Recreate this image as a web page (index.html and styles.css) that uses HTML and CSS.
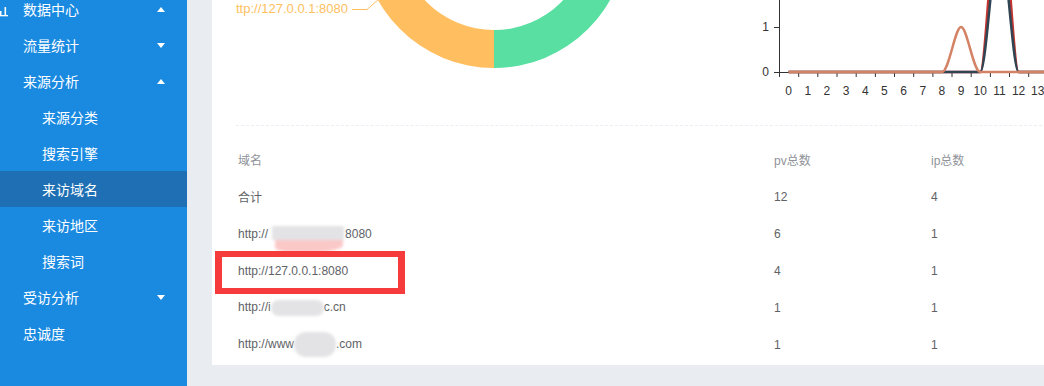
FILE: index.html
```html
<html>
  <head>
    <meta charset="utf-8" />
    <title>来访域名</title>
    <link rel="stylesheet" href="styles.css">
  </head>
  <body>
    <div class="layout">
      <div class="sidebar">
        <ul class="menu">
          <li class="item">
            <svg class="icon" width="8" height="16" viewBox="0 0 8 16">
              <rect x="0" y="10" width="1.5" height="4" fill="#fff" />
              <rect x="4.5" y="6" width="1.6" height="8" fill="#fff" />
              <rect x="0" y="14" width="8" height="1.3" fill="#fff" />
            </svg>
            <span>数据中心</span><i class="caret up"></i>
          </li>
          <li class="item"><span>流量统计</span><i class="caret"></i></li>
          <li class="item"><span>来源分析</span><i class="caret up"></i></li>
          <li class="item sub"><span>来源分类</span></li>
          <li class="item sub"><span>搜索引擎</span></li>
          <li class="item sub active"><span>来访域名</span></li>
          <li class="item sub"><span>来访地区</span></li>
          <li class="item sub"><span>搜索词</span></li>
          <li class="item"><span>受访分析</span><i class="caret"></i></li>
          <li class="item"><span>忠诚度</span></li>
        </ul>
      </div>
      <div class="main">
        <div class="card">
          <div class="charts">
            <svg class="pie" width="504" height="110">
              <path d="M125,-65 A133,133 0 0 0 258,68 L258,30 A95,95 0 0 1 163,-65 Z" fill="#ffbf60" />
              <path d="M258,68 A133,133 0 0 0 391,-65 L353,-65 A95,95 0 0 1 258,30 Z" fill="#58dfa1" />
              <polyline points="116,9.5 131,9.5 143,-1" fill="none" stroke="#ffbf60" stroke-width="1" />
              <text x="112" y="13" text-anchor="end" class="pie-label">http://127.0.0.1:8080</text>
            </svg>
            <svg class="line" width="304" height="110">
              <line x1="39.5" y1="0" x2="39.5" y2="72.5" stroke="#333" />
              <line x1="34" y1="27.5" x2="39.5" y2="27.5" stroke="#333" />
              <line x1="34" y1="72.5" x2="39.5" y2="72.5" stroke="#333" />
              <line x1="39" y1="72.5" x2="304" y2="72.5" stroke="#333" />
              <text x="29" y="31" text-anchor="end" class="axis">1</text>
              <text x="29" y="76" text-anchor="end" class="axis">0</text>
              <g stroke="#333">
                <line x1="58.7" y1="72" x2="58.7" y2="77" />
                <line x1="77.8" y1="72" x2="77.8" y2="77" />
                <line x1="97" y1="72" x2="97" y2="77" />
                <line x1="116.2" y1="72" x2="116.2" y2="77" />
                <line x1="135.4" y1="72" x2="135.4" y2="77" />
                <line x1="154.5" y1="72" x2="154.5" y2="77" />
                <line x1="173.7" y1="72" x2="173.7" y2="77" />
                <line x1="192.9" y1="72" x2="192.9" y2="77" />
                <line x1="212" y1="72" x2="212" y2="77" />
                <line x1="231.2" y1="72" x2="231.2" y2="77" />
                <line x1="250.4" y1="72" x2="250.4" y2="77" />
                <line x1="269.5" y1="72" x2="269.5" y2="77" />
                <line x1="288.7" y1="72" x2="288.7" y2="77" />
                <line x1="39.5" y1="72" x2="39.5" y2="77" />
              </g>
              <g class="axis" text-anchor="middle">
                <text x="48.6" y="95">0</text>
                <text x="67.8" y="95">1</text>
                <text x="86.9" y="95">2</text>
                <text x="106.1" y="95">3</text>
                <text x="125.3" y="95">4</text>
                <text x="144.4" y="95">5</text>
                <text x="163.6" y="95">6</text>
                <text x="182.8" y="95">7</text>
                <text x="201.9" y="95">8</text>
                <text x="221.1" y="95">9</text>
                <text x="240.3" y="95">10</text>
                <text x="259.5" y="95">11</text>
                <text x="278.6" y="95">12</text>
                <text x="297.8" y="95">13</text>
              </g>
              <path d="M48.6,72 L240.3,72 C246,72 253,-108 259.5,-108 C266,-108 273,72 278.6,72 L304,72" fill="none" stroke="#c23531" stroke-width="2.5" />
              <path d="M48.6,72 L240.3,72 C246.3,72 253.5,-63 259.5,-63 C265.5,-63 272.6,72 278.6,72 L304,72" fill="none" stroke="#2f4554" stroke-width="2.5" />
              <path d="M48.6,72 L201.9,72 C209,72 215,27 221.1,27 C227.2,27 233.3,72 240.3,72 L304,72" fill="none" stroke="#d48265" stroke-width="2.5" />
            </svg>
          </div>
          <table class="table">
            <colgroup>
              <col style="width: 536px" />
              <col style="width: 157px" />
              <col />
            </colgroup>
            <thead>
              <tr><th>域名</th><th>pv总数</th><th>ip总数</th></tr>
            </thead>
            <tbody>
              <tr><td>合计</td><td>12</td><td>4</td></tr>
              <tr>
                <td>http://<span class="blur wide"><span class="smudge"></span></span>8080</td>
                <td>6</td><td>1</td>
              </tr>
              <tr><td>http://127.0.0.1:8080</td><td>4</td><td>1</td></tr>
              <tr><td>http://i<span class="blur mid"></span>c.cn</td><td>1</td><td>1</td></tr>
              <tr><td>http://www<span class="blur round"></span>.com</td><td>1</td><td>1</td></tr>
            </tbody>
          </table>
          <div class="mark"></div>
        </div>
      </div>
    </div>
  </body>
</html>
```

FILE: styles.css
```css
* {
  margin: 0;
  padding: 0;
  box-sizing: border-box;
}
body {
  background: #e9edf2;
  font-family: "Liberation Sans", "Noto Sans CJK SC", sans-serif;
  overflow: hidden;
}
.layout {
  display: flex;
  height: 386px;
  overflow: hidden;
}
.sidebar {
  width: 187px;
  flex-shrink: 0;
  background: #1a8ae1;
  overflow: hidden;
}
.menu {
  list-style: none;
  margin-top: -9px;
}
.item {
  display: flex;
  align-items: center;
  height: 36px;
  padding: 0 22px 0 23px;
  color: #fff;
  font-size: 14px;
  font-family: "Noto Sans CJK SC", sans-serif;
}
.item.sub {
  padding-left: 42px;
}
.item.active {
  background: #1e6fb3;
}
.icon {
  margin-left: -23px;
  margin-right: 15px;
}
.caret {
  margin-left: auto;
  width: 0;
  height: 0;
  border-left: 4px solid transparent;
  border-right: 4px solid transparent;
  border-top: 5px solid #fff;
}
.caret.up {
  border-top: 0;
  border-bottom: 5px solid #fff;
}
.main {
  flex: 1;
  padding-left: 25px;
  overflow: hidden;
}
.card {
  position: relative;
  background: #fff;
  height: 365px;
  padding-left: 24px;
  width: 900px;
}
.charts {
  display: flex;
  height: 126px;
  border-bottom: 1px dashed #ebeef5;
}
.charts svg {
  display: block;
  overflow: hidden;
}
.pie-label {
  font-size: 13px;
  fill: #ffbf60;
}
.axis {
  font-size: 12px;
  fill: #333;
}
.table {
  margin-top: 15px;
  width: 808px;
  table-layout: fixed;
  border-collapse: collapse;
  font-size: 12px;
  color: #606266;
}
.table th,
.table td {
  height: 37px;
  padding: 0 0 0 2px;
  text-align: left;
  white-space: nowrap;
}
.table th {
  font-weight: normal;
  color: #909399;
}
.blur {
  position: relative;
  display: inline-block;
  vertical-align: middle;
  background: #e3e3e5;
  filter: blur(1.5px);
}
.blur.wide {
  width: 72px;
  height: 14px;
  margin: -2px 1px 0 4px;
}
.smudge {
  position: absolute;
  top: 14px;
  left: 3px;
  width: 68px;
  height: 13px;
  background: #fbc8c8;
  border-radius: 0 0 60% 40%;
}
.blur.mid {
  width: 53px;
  height: 16px;
  border-radius: 8px;
}
.blur.round {
  width: 42px;
  height: 25px;
  border-radius: 12px;
}
.mark {
  position: absolute;
  left: 3px;
  top: 251px;
  width: 190px;
  height: 43px;
  border-style: solid;
  border-color: #f53b3b;
  border-width: 6px 7px;
}
```
